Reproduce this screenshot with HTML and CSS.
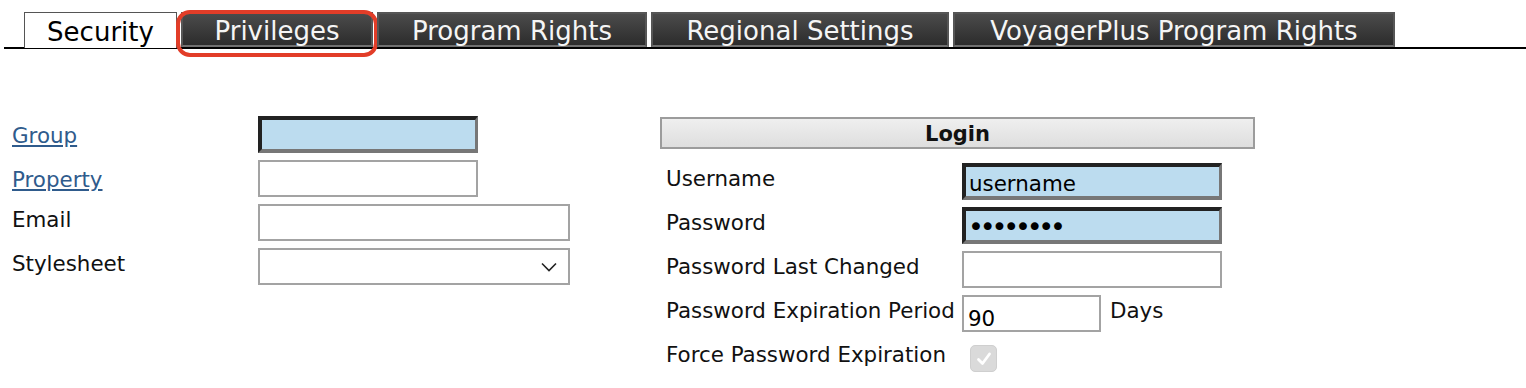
FILE: index.html
```html
<!DOCTYPE html>
<html>
<head>
<meta charset="utf-8">
<title>Security</title>
<link rel="stylesheet" href="styles.css">
</head>
<body>
<div class="tabbar">
  <div class="tab tab-active tab-security">Security</div>
  <div class="tab tab-privileges">Privileges<span class="highlight"></span></div>
  <div class="tab tab-program">Program Rights</div>
  <div class="tab tab-regional">Regional Settings</div>
  <div class="tab tab-voyager">VoyagerPlus Program Rights</div>
</div>

<div class="content">
  <div class="left-col">
    <a class="label label-link" href="#">Group</a>
    <input class="field field-required field-short" type="text" value="">
    <a class="label label-link" href="#">Property</a>
    <input class="field field-short" type="text" value="">
    <span class="label">Email</span>
    <input class="field field-wide" type="text" value="">
    <span class="label">Stylesheet</span>
    <div class="field field-wide select">
      <svg class="chevron" width="16" height="10" viewBox="0 0 16 10"><path d="M1 1.5 L8 8.5 L15 1.5" fill="none" stroke="#222" stroke-width="1.6"/></svg>
    </div>
  </div>

  <div class="right-col">
    <div class="panel-head">Login</div>
    <div class="login-grid">
      <span class="label">Username</span>
      <input class="field field-required field-login field-text" type="text" value="username">
      <span class="label">Password</span>
      <input class="field field-required field-login field-pass" type="password" value="password">
      <span class="label">Password Last Changed</span>
      <input class="field field-login" type="text" value="">
      <span class="label">Password Expiration Period</span>
      <div class="inline-row">
        <input class="field field-days" type="text" value="90">
        <span class="label">Days</span>
      </div>
      <span class="label">Force Password Expiration</span>
      <span class="checkbox">
        <svg width="18" height="18" viewBox="0 0 18 18"><path d="M3.5 9.5 L7.5 13.5 L14.5 4" fill="none" stroke="#fff" stroke-width="2.8" stroke-linecap="round" stroke-linejoin="round"/></svg>
      </span>
    </div>
  </div>
</div>
</body>
</html>
```

FILE: styles.css
```css
html, body {
  margin: 0;
  padding: 0;
  background: #ffffff;
}

body {
  font-family: "DejaVu Sans", Verdana, sans-serif;
  font-size: 21.4px;
  color: #111;
}

/* ---------- tabs ---------- */
.tabbar {
  display: flex;
  align-items: flex-end;
  gap: 4px;
  margin: 12px 0 0 4px;
  padding-left: 20px;
  border-bottom: 2px solid #000;
}

.tab {
  position: relative;
  box-sizing: border-box;
  height: 35px;
  display: flex;
  align-items: center;
  justify-content: center;
  font-size: 26px;
  line-height: 1;
  padding-top: 3px;
  color: #f5f5f5;
  background: linear-gradient(#4b4b4b, #2c2c2c);
  border: 2px solid #565656;
  border-bottom-color: #707070;
  white-space: nowrap;
}

.tab-active {
  color: #000;
  background: #fff;
  border: 1px solid #555;
  border-bottom: none;
  height: 36px;
  margin-bottom: -1px;
}

.tab-security { width: 153px; }
.tab-privileges { width: 192px; }
.tab-program { width: 270px; }
.tab-regional { width: 298px; }
.tab-voyager { width: 442px; }

.highlight {
  position: absolute;
  left: -7px;
  right: -7px;
  top: -4px;
  bottom: -12px;
  border: 4px solid #e23d28;
  border-radius: 14px;
  pointer-events: none;
}

/* ---------- form ---------- */
.content {
  display: flex;
  align-items: flex-start;
  padding-top: 67px;
}

.left-col {
  box-sizing: border-box;
  width: 660px;
  padding-left: 12px;
  display: grid;
  grid-template-columns: 246px auto;
  grid-auto-rows: 37px;
  row-gap: 7px;
  justify-items: start;
}

.label {
  line-height: 24px;
  padding-top: 4px;
  align-self: start;
  white-space: nowrap;
}

.label-link {
  color: #2f5b8c;
  text-decoration: underline;
  text-underline-offset: 2px;
  align-self: center;
  padding-top: 3px;
}

.field {
  box-sizing: border-box;
  height: 37px;
  margin: 0;
  padding: 0 4px;
  font-family: "DejaVu Sans", Verdana, sans-serif;
  font-size: 21.4px;
  color: #000;
  background: #fff;
  border: 2px solid #a3a3a3;
  outline: none;
}

.field-required {
  background: #bcdcef;
  border-style: solid;
  border-width: 4px 3px 4px 4px;
  border-color: #222 #777 #777 #222;
  padding: 0 3px;
}

.field-text {
  padding-top: 4px;
}

.field-short { width: 220px; }
.field-wide { width: 312px; }

.select {
  display: flex;
  align-items: center;
  justify-content: flex-end;
  padding-right: 11px;
}

.right-col {
  width: 595px;
  padding-top: 1px;
}

.panel-head {
  box-sizing: border-box;
  height: 32px;
  display: flex;
  align-items: center;
  justify-content: center;
  padding-top: 1px;
  font-weight: bold;
  font-size: 21px;
  color: #111;
  background: linear-gradient(#efefef, #dedede);
  border: 2px solid #9c9c9c;
}

.login-grid {
  display: grid;
  grid-template-columns: 302px auto;
  grid-auto-rows: 37px;
  row-gap: 7px;
  margin-top: 14px;
  justify-items: start;
}

.login-grid > .label {
  padding-left: 6px;
}

.field-login { width: 260px; }

.field-pass {
  font-size: 27px;
  letter-spacing: -4.2px;
  padding-left: 2px;
  padding-top: 2px;
}

.inline-row {
  display: flex;
  align-items: flex-start;
  gap: 9px;
}

.inline-row .label {
  padding-left: 0;
}

.field-days {
  width: 139px;
  padding-top: 9px;
}

.checkbox {
  box-sizing: border-box;
  width: 27px;
  height: 27px;
  margin: 6px 0 0 8px;
  border-radius: 5px;
  background: #dadada;
  border: 1px solid #cfcfcf;
  display: flex;
  align-items: center;
  justify-content: center;
}
```
